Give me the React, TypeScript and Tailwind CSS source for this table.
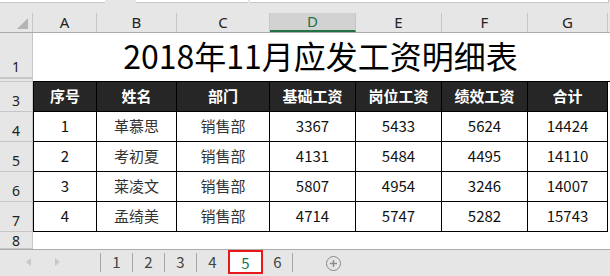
import React from "react";

const GRID = "grid grid-cols-[33px_64px_80px_93px_86px_86px_86px_80px_1fr]";
const CJK = "font-['Noto_Sans_CJK_SC','Noto_Sans',sans-serif]";
const UI = "font-['Noto_Sans','Noto_Sans_CJK_SC',sans-serif]";

const letters = ["A", "B", "C", "D", "E", "F", "G"];
const heads = ["序号", "姓名", "部门", "基础工资", "岗位工资", "绩效工资", "合计"];
const rows = [
  ["1", "革慕思", "销售部", "3367", "5433", "5624", "14424"],
  ["2", "考初夏", "销售部", "4131", "5484", "4495", "14110"],
  ["3", "莱凌文", "销售部", "5807", "4954", "3246", "14007"],
  ["4", "孟绮美", "销售部", "4714", "5747", "5282", "15743"],
];

const RowHead = ({ n, h, pb = "pb-[3px]" }: { n: string; h: string; pb?: string }) => (
  <div
    className={`${h} ${pb} bg-[#e6e6e6] border-b border-r border-[#c6c6c6] flex items-end justify-center text-[14px] leading-none text-[#222] ${UI}`}
  >
    {n}
  </div>
);

export default function App() {
  return (
    <div className="w-[610px] h-[276px] overflow-hidden bg-[#e6e6e6] flex flex-col">
      {/* formula bar remnants */}
      <div className="h-[13px] flex items-start">
        <div className="w-[105px] h-[3px] bg-white border-b border-[#c6c6c6]" />
        <div className="w-[31px]" />
        <div className="w-[112px] h-[3px] bg-white border-b border-[#c6c6c6]" />
        <div className="w-[2px]" />
        <div className="w-[359px] h-[3px] bg-white border-b border-r border-[#c6c6c6]" />
      </div>

      {/* column headers */}
      <div className={`${GRID} h-[20px] border-b border-[#ababab] ${UI}`}>
        <div className="relative border-r border-[#c6c6c6]">
          <div className="absolute right-[4px] bottom-[3px] w-0 h-0 border-l-[11px] border-l-transparent border-b-[11px] border-b-[#b4b4b4]" />
        </div>
        {letters.map((l) =>
          l === "D" ? (
            <div
              key={l}
              className="bg-[#d2d2d2] border-r border-[#c6c6c6] border-b-2 border-b-[#217346] flex items-center justify-center text-[15px] text-[#217346] leading-none"
            >
              {l}
            </div>
          ) : (
            <div
              key={l}
              className="border-r border-[#c6c6c6] flex items-center justify-center text-[15px] text-[#222] leading-none"
            >
              {l}
            </div>
          )
        )}
        <div />
      </div>

      {/* row 1: title */}
      <div className={GRID}>
        <RowHead n="1" h="h-[45px]" />
        <div
          className={`col-span-8 bg-white flex items-center justify-center pr-[2px] pb-[1px] text-[32px] leading-none text-black ${CJK}`}
        >
          2018年11月应发工资明细表
        </div>
      </div>

      {/* row 2 hidden */}
      <div className={GRID}>
        <div className="h-[4px] bg-[#e6e6e6] border-b border-r border-[#c6c6c6] border-t border-t-[#c6c6c6]" />
        <div className="col-span-8 bg-white border-b border-black" />
      </div>

      {/* row 3: header band */}
      <div className={GRID}>
        <RowHead n="3" h="h-[30px]" />
        {heads.map((h, i) => (
          <div
            key={h}
            className={`bg-[#262626] border-r border-b border-black ${i === 0 ? "border-l" : ""} flex items-center justify-center text-[15px] font-bold text-white ${CJK}`}
          >
            {h}
          </div>
        ))}
        <div className="bg-white" />
      </div>

      {/* data rows */}
      {rows.map((r, ri) => (
        <div key={ri} className={GRID}>
          <RowHead n={String(ri + 4)} h="h-[30px]" />
          {r.map((c, ci) => (
            <div
              key={ci}
              className={`bg-white border-r border-b border-black ${ci === 0 ? "border-l" : ""} flex items-center justify-center text-[15px] ${ci === 1 || ci === 2 ? "text-[#333]" : "text-[#111]"} ${CJK}`}
            >
              {c}
            </div>
          ))}
          <div className="bg-white" />
        </div>
      ))}

      {/* row 8 */}
      <div className={GRID}>
        <RowHead n="8" h="h-[17px]" pb="pb-0" />
        <div className="col-span-8 bg-white" />
      </div>

      {/* sheet tabs */}
      <div className={`flex-1 border-t border-[#ababab] flex items-start ${CJK}`}>
        <div className="w-[100px] h-[23px] flex items-center">
          <div className="ml-[26px] w-0 h-0 border-y-[4px] border-y-transparent border-r-[5px] border-r-[#c8c8c8]" />
          <div className="ml-[24px] w-0 h-0 border-y-[4px] border-y-transparent border-l-[5px] border-l-[#c8c8c8]" />
        </div>
        {["1", "2", "3", "4"].map((t) => (
          <div key={t} className="w-[32px] h-[23px] flex items-center">
            <div className="w-px h-[19px] bg-[#a6a6a6] self-start mt-[3px]" />
            <div className="flex-1 text-center text-[15px] text-[#444] leading-none">{t}</div>
          </div>
        ))}
        <div className="w-[35px] h-[24px] bg-white border-2 border-[#e8191b] flex items-center justify-center text-[15px] text-[#217346] leading-none">
          5
        </div>
        <div className="w-[29px] h-[23px] flex items-center justify-center text-[15px] text-[#444] leading-none">
          6
        </div>
        <div className="w-px h-[19px] bg-[#a6a6a6] mt-[3px]" />
        <div className="ml-[33px] mt-[6px] w-[15px] h-[15px] rounded-full border border-[#8a8a8a] flex items-center justify-center">
          <svg width="9" height="9" viewBox="0 0 9 9">
            <path d="M4.5 1v7M1 4.5h7" stroke="#8a8a8a" strokeWidth="1.4" />
          </svg>
        </div>
      </div>
    </div>
  );
}
